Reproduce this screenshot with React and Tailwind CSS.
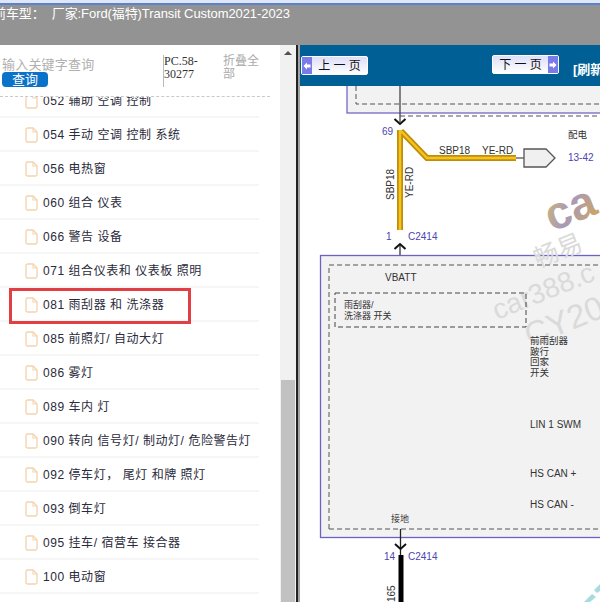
const ITEMS = [
  { code: '054', name: '手动 空调 控制 系统' },
  { code: '056', name: '电热窗' },
  { code: '060', name: '组合 仪表' },
  { code: '066', name: '警告 设备' },
  { code: '071', name: '组合仪表和 仪表板 照明' },
  { code: '081', name: '雨刮器 和 洗涤器', marked: true },
  { code: '085', name: '前照灯/ 自动大灯' },
  { code: '086', name: '雾灯' },
  { code: '089', name: '车内 灯' },
  { code: '090', name: '转向 信号灯/ 制动灯/ 危险警告灯' },
  { code: '092', name: '停车灯， 尾灯 和牌 照灯' },
  { code: '093', name: '倒车灯' },
  { code: '095', name: '挂车/ 宿营车 接合器' },
  { code: '100', name: '电动窗' },
]

const CJK = '"Liberation Sans","Noto Sans CJK SC",sans-serif'

function FileIcon() {
  return (
    <svg width="13" height="16" viewBox="0 0 13 16" fill="none" className="shrink-0">
      <path d="M1 2.5a1.5 1.5 0 0 1 1.5-1.5H8l4 4v8.5a1.5 1.5 0 0 1-1.5 1.5h-8A1.5 1.5 0 0 1 1 13.500z" stroke="#f3d3ad" strokeWidth="1.300" fill="#fff" />
      <path d="M8 1v4h4" stroke="#f3d3ad" strokeWidth="1.100" />
    </svg>
  )
}

function Row({ code, name, marked }) {
  return (
    <div className="relative flex h-[34px] w-[259px] items-center gap-[5px] border-b-2 border-[#f6f6f6] pl-[25px] pt-[2px] text-[12px] text-[#2a2a3a]">
      <FileIcon />
      <span className="whitespace-pre tracking-[0.55px]">{code} {name}</span>
      {marked && <div className="absolute left-[9px] top-0 h-[36px] w-[182px] border-[3px] border-[#e23f44]" />}
    </div>
  )
}

function PageButton({ dir, label }) {
  const prev = dir === 'prev'
  return (
    <div className={`flex h-[19px] w-[67px] items-center rounded-[2px] border border-white bg-gradient-to-b from-[#dedef8] to-white ${prev ? '' : 'flex-row-reverse'}`}>
      <div className="flex h-full w-[10px] items-center justify-center bg-[#7a7ae8]">
        <svg width="8" height="8" viewBox="0 0 8 8">
          <path d={prev ? 'M0.500 4L4 0.500V2.500H7.500V5.500H4V7.500z' : 'M7.500 4L4 0.500V2.500H0.500V5.500H4V7.500z'} fill="#fff" />
        </svg>
      </div>
      <span className="flex-1 whitespace-pre text-center text-[12px] leading-none text-[#111]">{label}</span>
    </div>
  )
}

function Diagram() {
  const labelFont = { fontFamily: CJK }
  return (
    <svg width="300" height="516" viewBox="300 86 300 516" className="block" style={labelFont}>
      <defs>
        <linearGradient id="mark" x1="0" y1="0" x2="1" y2="1">
          <stop offset="0" stopColor="#d9c35a" />
          <stop offset="0.5" stopColor="#a89ab8" />
          <stop offset="1" stopColor="#d9a84a" />
        </linearGradient>
      </defs>

      {/* top module */}
      <rect x="347" y="80" width="260" height="33" fill="#f2f2f2" stroke="#7467c4" strokeWidth="1.300" />
      <path d="M356 86v18h250" fill="none" stroke="#555" strokeWidth="1" strokeDasharray="5 3" />
      <path d="M400 116h210" fill="none" stroke="#555" strokeWidth="1" strokeDasharray="5 3" />
      <path d="M400 86v36" stroke="#444" strokeWidth="1.300" />
      <path d="M394.500 119l5.500 5 5.500-5" fill="none" stroke="#111" strokeWidth="2" />

      {/* yellow wire */}
      <path d="M400 130v100M401 131l26 27h89" fill="none" stroke="#c28c0a" strokeWidth="6" />
      <path d="M400 130v100M401 131l26 27h89" fill="none" stroke="#f2c41e" strokeWidth="2.500" />
      <path d="M524 149h22l9 9-9 9h-22z" fill="#f0f0f0" stroke="#555" strokeWidth="1.300" />
      <path d="M516 158h8" stroke="#555" strokeWidth="1.300" />
      <text x="382" y="135" fontSize="10" fill="#4a45b0">69</text>
      <text x="439" y="154" fontSize="10" fill="#333">SBP18</text>
      <text x="482" y="154" fontSize="10" fill="#333">YE-RD</text>
      <text x="568" y="138" fontSize="9.500" fill="#333">配电</text>
      <text x="568" y="161" fontSize="10" fill="#4a45b0">13-42</text>
      <text transform="translate(394 200) rotate(-90)" fontSize="10" fill="#333">SBP18</text>
      <text transform="translate(413 198) rotate(-90)" fontSize="10" fill="#333">YE-RD</text>

      <text x="386" y="240" fontSize="10" fill="#4a45b0">1</text>
      <text x="408" y="240" fontSize="10" fill="#4a45b0">C2414</text>
      <path d="M400 244v21" stroke="#333" strokeWidth="1.300" />
      <path d="M394.500 249l5.500-5 5.500 5" fill="none" stroke="#111" strokeWidth="2" />

      {/* main module */}
      <rect x="320.500" y="255.500" width="300" height="282" fill="#f2f2f2" stroke="#6a62c4" strokeWidth="1.300" />

      {/* watermark */}
      <text x="552" y="232" fontSize="46" fontWeight="700" fill="url(#mark)" transform="rotate(-22 552 232)">ca</text>
      <text x="538" y="268" fontSize="25" fill="#dadada" transform="rotate(-22 538 268)">畅易</text>
      <text x="497" y="320" fontSize="28" fill="#dadada" transform="rotate(-22 497 320)">car388.c</text>
      <text x="530" y="347" fontSize="33" fill="#dadada" transform="rotate(-22 530 347)">CY20</text>

      <path d="M329 529V265h280M329 529h280" fill="none" stroke="#555" strokeWidth="1" strokeDasharray="5 3" />
      <rect x="335" y="293" width="191" height="34" fill="none" stroke="#444" strokeWidth="1" strokeDasharray="5 3" />
      <text x="385" y="281" fontSize="10" fill="#333">VBATT</text>
      <text x="344" y="308" fontSize="9" fill="#333">雨刮器/</text>
      <text x="344" y="319" fontSize="9" fill="#333">洗涤器 开关</text>
      <text x="530" y="344" fontSize="9.500" fill="#333">前雨刮器</text>
      <text x="530" y="355" fontSize="9.500" fill="#333">跛行</text>
      <text x="530" y="365" fontSize="9.500" fill="#333">回家</text>
      <text x="530" y="376" fontSize="9.500" fill="#333">开关</text>
      <text x="530" y="428" fontSize="10" fill="#333">LIN 1 SWM</text>
      <text x="530" y="477" fontSize="10" fill="#333">HS CAN +</text>
      <text x="530" y="508" fontSize="10" fill="#333">HS CAN -</text>
      <text x="391" y="522" fontSize="9" fill="#333">接地</text>

      {/* ground wire */}
      <path d="M400.500 529v27" stroke="#222" strokeWidth="1.300" />
      <path d="M395 544l5.500 5 5.500-5" fill="none" stroke="#111" strokeWidth="2" />
      <path d="M401 555v47" stroke="#000" strokeWidth="5" />
      <text x="384" y="560" fontSize="10" fill="#4a45b0">14</text>
      <text x="408" y="560" fontSize="10" fill="#4a45b0">C2414</text>
      <text transform="translate(395 602) rotate(-90)" fontSize="10" fill="#333">165</text>

      {/* watermark corner */}
      <path d="M584 602l8-8 4 3-6 5zM594 590l6-6v7l-3 2z" fill="#a8dbe0" />
    </svg>
  )
}

export default function App() {
  return (
    <div className="flex h-[602px] w-[600px] flex-col overflow-hidden bg-white" style={{ fontFamily: CJK }}>
      <div className="h-[3px] bg-[#dfe6f7]" />
      <div className="h-[2px] bg-[#5b82cc]" />
      <div className="h-[40px] bg-[#939393] text-[13px] leading-[18px] tracking-[-0.08px] text-white">
        <div className="-ml-[7px] whitespace-pre">前车型：  厂家:Ford(福特)Transit Custom2021-2023</div>
      </div>

      <div className="flex min-h-0 flex-1">
        {/* left tree */}
        <div className="flex w-[280px] flex-col">
          <div className="flex h-[52px] w-[270px] shrink-0 border-b border-dashed border-[#c9c9c9]">
            <div className="w-[163px] pl-[2px] pt-[13px]">
              <div className="text-[13px] leading-[14px] tracking-[0.2px] text-[#b0b0b0]">输入关键字查询</div>
              <div className="h-[15px] w-[46px] rounded-[4px] bg-[#0b72c9] text-center text-[13px] leading-[15px] text-white">查询</div>
            </div>
            <div className="mt-[10px] h-[32px] w-[60px] border-l border-[#bbb] font-['Liberation_Serif','Noto_Sans_CJK_SC',serif] text-[12px] leading-[13px] text-[#333]">
              PC.58-<br />30277
            </div>
            <div className="w-[36px] pt-[10px] text-[12px] leading-[13px] text-[#aaa]">折叠全部</div>
          </div>
          <div className="min-h-0 flex-1 overflow-hidden">
            <div className="relative h-[21px] w-[259px] overflow-hidden border-b-2 border-[#f6f6f6]">
              <div className="absolute -top-[5px] left-[25px] flex items-center gap-[5px] text-[12px] tracking-[0.55px] text-[#2a2a3a]">
                <FileIcon />
                <span className="whitespace-pre">052 辅助 空调 控制</span>
              </div>
            </div>
            {ITEMS.map((item) => (
              <Row key={item.code} {...item} />
            ))}
          </div>
        </div>

        {/* scrollbar */}
        <div className="flex w-[16px] flex-col bg-[#f1f1f1]">
          <div className="flex h-[17px] items-start justify-center pt-[6px]">
            <div className="h-0 w-0 border-x-[4px] border-b-[4px] border-x-transparent border-b-[#505050]" />
          </div>
          <div className="mx-auto mt-[318px] h-[222px] w-[14px] bg-[#c1c1c1]" />
        </div>
        <div className="w-[2px] bg-[#222]" />
        <div className="w-[2px] bg-[#a3a3a3]" />

        {/* right page */}
        <div className="flex min-w-0 flex-1 flex-col">
          <div className="flex h-[41px] shrink-0 items-start bg-[#005f95] pl-[1px]">
            <div className="mt-[11px]"><PageButton dir="prev" label="上 一 页" /></div>
            <div className="ml-[124px] mt-[10px]"><PageButton dir="next" label="下 一 页" /></div>
            <span className="ml-[14px] mt-[18px] whitespace-nowrap text-[13px] font-bold leading-[14px] text-white">[刷新</span>
          </div>
          <div className="min-h-0 flex-1 overflow-hidden">
            <Diagram />
          </div>
        </div>
      </div>
    </div>
  )
}
